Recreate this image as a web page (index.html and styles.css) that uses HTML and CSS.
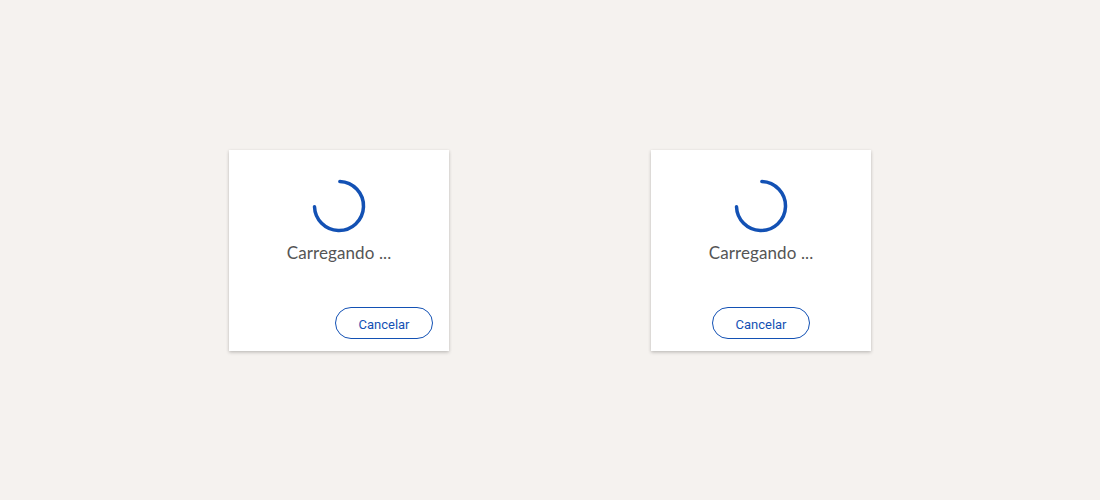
FILE: index.html
```html
<!DOCTYPE html>
<html lang="pt-BR">
<head>
<meta charset="utf-8">
<title>Carregando</title>
<link rel="stylesheet" href="styles.css">
</head>
<body>
<main class="stage">
  <section class="card card--end">
    <svg class="spinner" viewBox="0 0 54 54" width="54" height="54" aria-hidden="true">
      <circle cx="27" cy="27" r="24.5" fill="none" stroke="#1351b4" stroke-width="3.5" stroke-linecap="round" stroke-dasharray="113 200" transform="rotate(-88 27 27)"/>
    </svg>
    <p class="label">Carregando ...</p>
    <button class="btn" type="button">Cancelar</button>
  </section>
  <section class="card card--center">
    <svg class="spinner" viewBox="0 0 54 54" width="54" height="54" aria-hidden="true">
      <circle cx="27" cy="27" r="24.5" fill="none" stroke="#1351b4" stroke-width="3.5" stroke-linecap="round" stroke-dasharray="113 200" transform="rotate(-88 27 27)"/>
    </svg>
    <p class="label">Carregando ...</p>
    <button class="btn" type="button">Cancelar</button>
  </section>
</main>
</body>
</html>
```
FILE: styles.css
```css
html, body {
  margin: 0;
  padding: 0;
  height: 100%;
}
body {
  background: #f5f2ef;
  font-family: "Lato", "Open Sans", sans-serif;
}
.stage {
  display: flex;
  justify-content: center;
  gap: 202px;
  padding-top: 150px;
}
.card {
  box-sizing: border-box;
  width: 220px;
  height: 201px;
  background: #ffffff;
  box-shadow: 0 1px 3px rgba(0, 0, 0, 0.18), 0 2px 4px rgba(0, 0, 0, 0.08);
  display: flex;
  flex-direction: column;
  align-items: center;
  padding: 29px 16px 12px;
}
.spinner {
  display: block;
  flex: none;
}
.label {
  margin: 9px 0 0;
  font-size: 17px;
  line-height: 22px;
  color: #555555;
  letter-spacing: 0.1px;
}
.btn {
  margin-top: auto;
  box-sizing: border-box;
  width: 98px;
  height: 32px;
  border: 1px solid #1351b4;
  border-radius: 16px;
  background: #ffffff;
  color: #1351b4;
  font-family: "Roboto", "Open Sans", sans-serif;
  font-size: 13px;
  padding: 3px 0 0;
}
.card--end .btn {
  align-self: flex-end;
}
```
